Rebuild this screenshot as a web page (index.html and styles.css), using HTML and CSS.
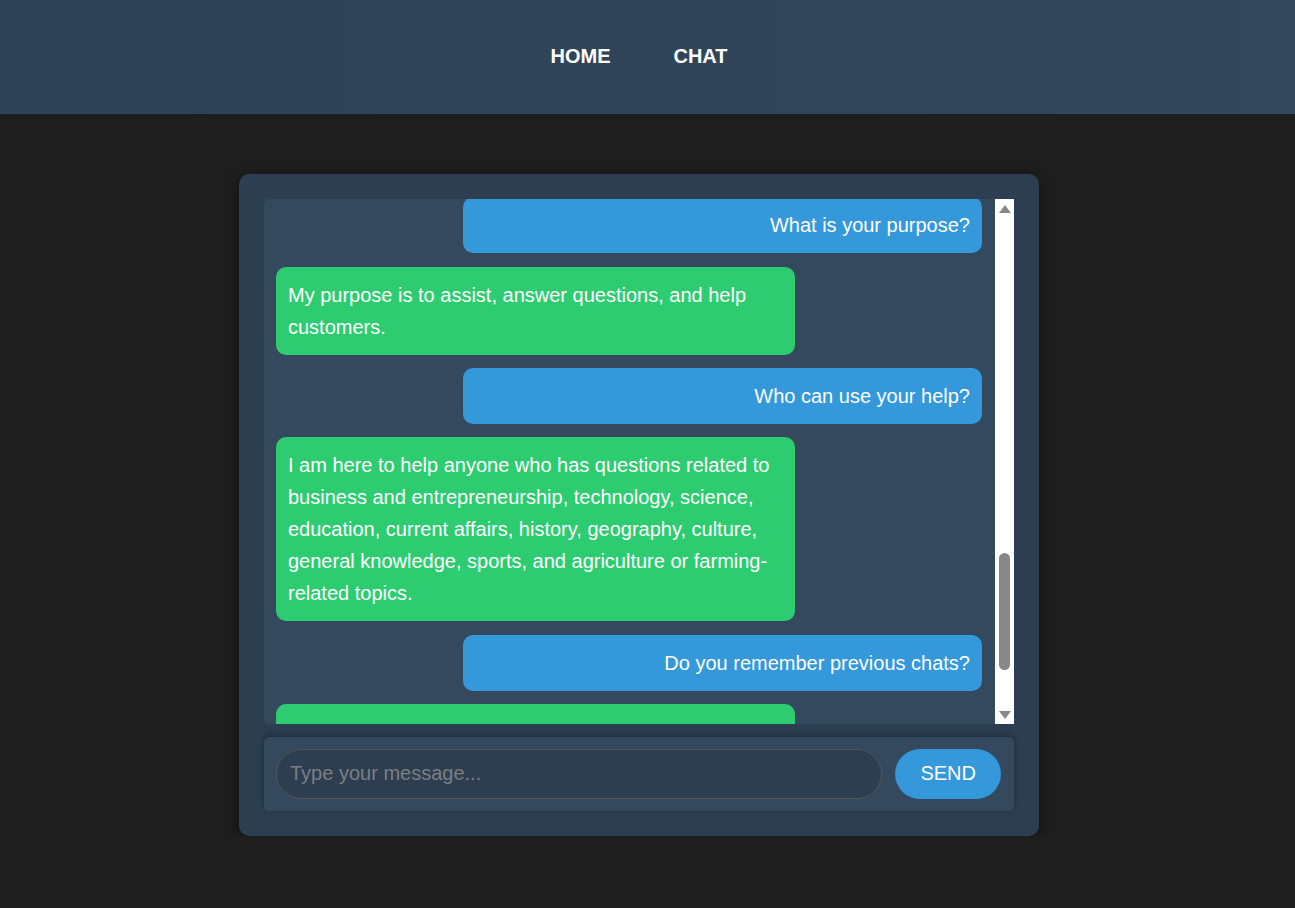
FILE: index.html
```html
<!DOCTYPE html>
<html lang="en">
<head>
<meta charset="utf-8">
<title>Chat</title>
<link rel="stylesheet" href="styles.css">
</head>
<body>
<header class="site-header">
  <nav class="nav">
    <a href="#" class="nav-link">HOME</a>
    <a href="#" class="nav-link">CHAT</a>
  </nav>
</header>
<main class="page">
  <section class="chat-container">
    <div class="messages">
      <div class="messages-viewport" id="viewport">
        <div class="bubble user">Hello</div>
        <div class="bubble bot">Hello! How can I assist you today?</div>
        <div class="bubble user">What is your name?</div>
        <div class="bubble bot">I am an AI assistant created to help answer your questions and provide useful information.</div>
        <div class="bubble user">What can you do?</div>
        <div class="bubble bot">I can answer questions, explain concepts, give advice, and help you find information on a wide range of different topics.</div>
        <div class="bubble user">Are you a human?</div>
        <div class="bubble bot">No, I am not a human. I am a computer program that uses artificial intelligence to understand and respond to your messages.</div>
        <div class="bubble user">How do you work?</div>
        <div class="bubble bot">I process the text you send me, understand what you are asking, and generate a helpful response based on the knowledge I have been trained on.</div>
        <div class="bubble user">Can you speak other languages?</div>
        <div class="bubble bot">Yes, I can understand and respond in several languages, although I work best in English.</div>
        <div class="bubble user">Are you available all the time?</div>
        <div class="bubble bot">Yes, I am available 24 hours a day, 7 days a week, so you can ask me questions whenever you need help with anything at all.</div>
        <div class="bubble user">Is my information safe?</div>
        <div class="bubble bot">Yes, your privacy is important. I do not share your personal information with anyone, and your messages are handled securely.</div>
        <div class="bubble user" id="anchor">What is your purpose?</div>
        <div class="bubble bot">My purpose is to assist, answer questions, and help customers.</div>
        <div class="bubble user">Who can use your help?</div>
        <div class="bubble bot">I am here to help anyone who has questions related to business and entrepreneurship, technology, science, education, current affairs, history, geography, culture, general knowledge, sports, and agriculture or farming-related topics.</div>
        <div class="bubble user">Do you remember previous chats?</div>
        <div class="bubble bot">No, I do not have memory of previous conversations. Each chat session is independent, so I cannot recall information from past chats. Please share any details again.</div>
      </div>
      <div class="scrollbar">
        <div class="sb-btn">
          <svg width="12" height="8" viewBox="0 0 12 8"><polygon points="6,0 12,8 0,8" fill="#888"/></svg>
        </div>
        <div class="sb-track"><div class="sb-thumb" id="thumb"></div></div>
        <div class="sb-btn">
          <svg width="12" height="8" viewBox="0 0 12 8"><polygon points="0,0 12,0 6,8" fill="#888"/></svg>
        </div>
      </div>
    </div>
    <div class="input-area">
      <input class="msg-input" type="text" placeholder="Type your message...">
      <button class="send-btn" type="button">SEND</button>
    </div>
  </section>
</main>
<script src="script.js"></script>
</body>
</html>
```

FILE: styles.css
```css
html, body {
  margin: 0;
  padding: 0;
}

body {
  background: #1e1e1e;
  font-family: "Liberation Sans", Arial, sans-serif;
  color: #fff;
}

.site-header {
  background: linear-gradient(90deg, #2e4155, #33485d);
  padding: 45px 17px 46px 0;
}

.nav {
  display: flex;
  justify-content: center;
  gap: 63px;
}

.nav-link {
  color: #fff;
  text-decoration: none;
  font-weight: bold;
  font-size: 20px;
  line-height: 23px;
}

.page {
  display: flex;
  justify-content: center;
  padding: 60px 17px 0 0;
}

.chat-container {
  width: 800px;
  box-sizing: border-box;
  padding: 25px;
  background: #2c3e50;
  border-radius: 10px;
  box-shadow: 0 4px 14px rgba(0, 0, 0, 0.5);
  display: flex;
  flex-direction: column;
  gap: 13px;
}

.messages {
  display: flex;
  height: 525px;
  background: #34495e;
  border-radius: 5px 0 0 5px;
}

.messages-viewport {
  flex: 1;
  min-width: 0;
  box-sizing: border-box;
  overflow: hidden;
  padding: 12px;
}

.scrollbar {
  width: 19px;
  flex: none;
  background: #fff;
  display: flex;
  flex-direction: column;
}

.sb-btn {
  height: 19px;
  flex: none;
  display: flex;
  align-items: center;
  justify-content: center;
}

.sb-track {
  flex: 1;
  position: relative;
}

.sb-thumb {
  position: absolute;
  left: 4px;
  right: 4px;
  top: 0;
  height: 40px;
  background: #888;
  border-radius: 6px;
}

.bubble {
  width: 70%;
  padding: 12px;
  border-radius: 10px;
  margin-bottom: 13.33px;
  font-size: 20px;
  line-height: 32px;
  color: #fff;
}

.bubble.user {
  margin-left: auto;
  margin-right: 1px;
  background: #3498db;
  text-align: right;
}

.bubble.bot {
  background: #2ecc71;
}

.input-area {
  display: flex;
  gap: 13px;
  padding: 12px 13px 12px 12px;
  background: #34495e;
  border-radius: 5px;
  box-shadow: 0 -2px 6px rgba(0, 0, 0, 0.3);
}

.msg-input {
  flex: 1;
  min-width: 0;
  height: 50px;
  box-sizing: border-box;
  border: 1px solid #555;
  border-radius: 25px;
  padding: 0 13px 2px;
  background: #2c3e50;
  color: #fff;
  font-family: "Liberation Sans", Arial, sans-serif;
  font-size: 20px;
  outline: none;
}

.msg-input::placeholder {
  color: #7b7e82;
}

.send-btn {
  height: 50px;
  padding: 0 25px 2px;
  border: none;
  border-radius: 25px;
  background: #3498db;
  color: #fff;
  font-family: "Liberation Sans", Arial, sans-serif;
  font-size: 20px;
  cursor: pointer;
}
```

FILE: script.js
```js
var view = document.getElementById('viewport');
var anchor = document.getElementById('anchor');
var thumb = document.getElementById('thumb');
view.scrollTop = anchor.getBoundingClientRect().top - view.getBoundingClientRect().top + 2;
var track = thumb.parentNode.clientHeight;
var ratio = view.clientHeight / view.scrollHeight;
thumb.style.height = Math.round(track * ratio) + 'px';
thumb.style.top = Math.round(track * view.scrollTop / view.scrollHeight) + 'px';
```
